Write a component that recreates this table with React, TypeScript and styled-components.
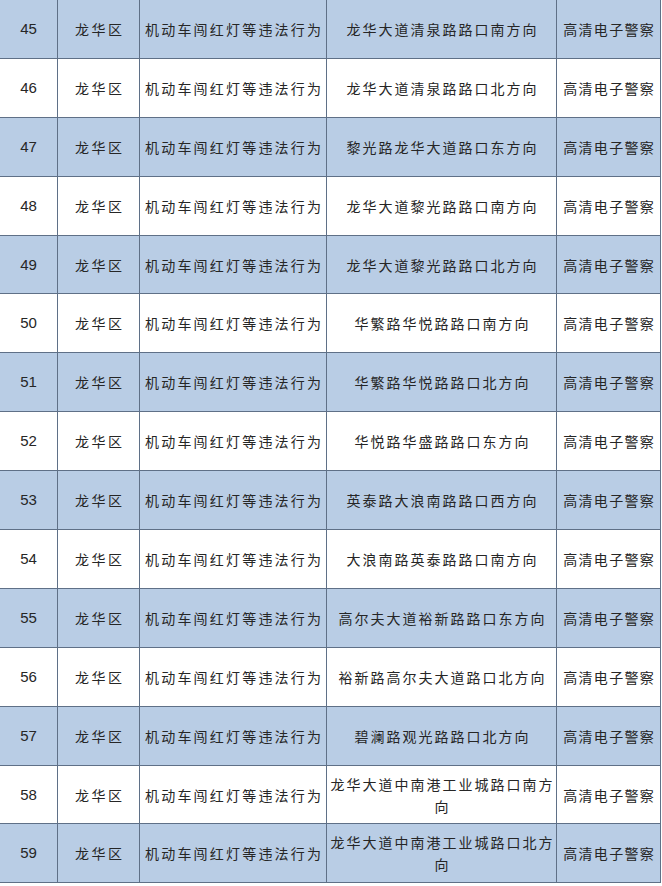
import React from "react";
import styled, { createGlobalStyle } from "styled-components";

const Global = createGlobalStyle`
  html, body { margin: 0; padding: 0; background: #ffffff; }
  body { font-family: "Noto Sans CJK SC", "Liberation Sans", sans-serif; }
`;

const Table = styled.div`
  display: grid;
  grid-template-columns: 58px 82px 187px 230px 104px;
  grid-auto-rows: 58.9px;
  width: 661px;
  overflow: hidden;
`;

const Cell = styled.div<{ $shade: boolean; $ls: number; $num?: boolean; $nowrap?: boolean }>`
  display: flex;
  align-items: center;
  justify-content: center;
  text-align: center;
  box-sizing: border-box;
  min-width: 0;
  background: ${(p) => (p.$shade ? "#b9cde5" : "#ffffff")};
  border-right: 1px solid #5f7087;
  border-bottom: 1px solid #5f7087;
  color: #262626;
  font-family: ${(p) =>
    p.$num
      ? `"Liberation Sans", Arial, sans-serif`
      : `"Noto Sans CJK SC", sans-serif`};
  font-size: ${(p) => (p.$num ? 15 : 14)}px;
  line-height: 22px;
  letter-spacing: ${(p) => p.$ls}px;
  padding: 0 0 0 ${(p) => p.$ls}px;
  white-space: ${(p) => (p.$nowrap ? "nowrap" : "normal")};
  word-break: break-all;
`;

const rows: [number, string][] = [
  [45, "龙华大道清泉路路口南方向"],
  [46, "龙华大道清泉路路口北方向"],
  [47, "黎光路龙华大道路口东方向"],
  [48, "龙华大道黎光路路口南方向"],
  [49, "龙华大道黎光路路口北方向"],
  [50, "华繁路华悦路路口南方向"],
  [51, "华繁路华悦路路口北方向"],
  [52, "华悦路华盛路路口东方向"],
  [53, "英泰路大浪南路路口西方向"],
  [54, "大浪南路英泰路路口南方向"],
  [55, "高尔夫大道裕新路路口东方向"],
  [56, "裕新路高尔夫大道路口北方向"],
  [57, "碧澜路观光路路口北方向"],
  [58, "龙华大道中南港工业城路口南方向"],
  [59, "龙华大道中南港工业城路口北方向"],
];

export default function App() {
  return (
    <>
      <Global />
      <Table>
        {rows.map(([n, loc]) => {
          const shade = n % 2 === 1;
          return (
            <React.Fragment key={n}>
              <Cell $shade={shade} $ls={0} $num>
                {n}
              </Cell>
              <Cell $shade={shade} $ls={2.5} $nowrap>
                龙华区
              </Cell>
              <Cell $shade={shade} $ls={2.2} $nowrap>
                机动车闯红灯等违法行为
              </Cell>
              <Cell $shade={shade} $ls={2}>
                {loc}
              </Cell>
              <Cell $shade={shade} $ls={1.3} $nowrap>
                高清电子警察
              </Cell>
            </React.Fragment>
          );
        })}
      </Table>
    </>
  );
}
